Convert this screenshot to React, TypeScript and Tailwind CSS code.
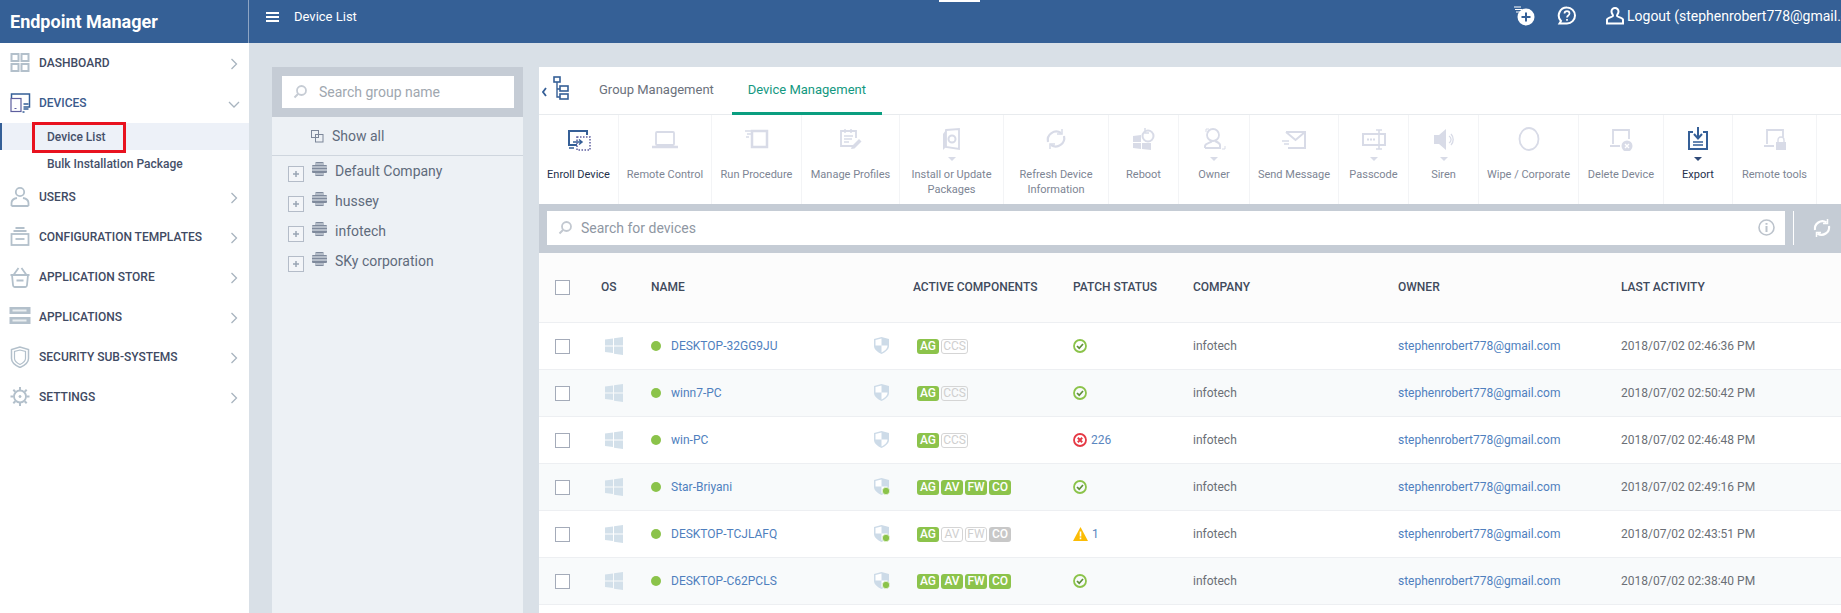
import type { ReactNode } from 'react';

const font = { roboto: "font-['Roboto','Noto_Sans',sans-serif]" };

const Off = '#d8dbe7';
const Blue = '#355f97';

function Chevron({ down }: { down?: boolean }) {
  return (
    <svg width="12" height="12" viewBox="0 0 12 12" fill="none" stroke="#a8b4bf" strokeWidth="1.3">
      {down ? <path d="M1 4l5 5 5-5" /> : <path d="M3.5 1l5 5-5 5" />}
    </svg>
  );
}

const navIcons: Record<string, ReactNode> = {
  DASHBOARD: (
    <g fill="none" stroke="#b3c0cb" strokeWidth="2">
      <rect x="2" y="2" width="7" height="7" />
      <rect x="12" y="2" width="7" height="7" />
      <rect x="2" y="12" width="7" height="7" />
      <rect x="12" y="12" width="7" height="7" />
    </g>
  ),
  DEVICES: (
    <g fill="none">
      <path d="M2 6V2h18v13h-6" stroke={Blue} strokeWidth="1.5" />
      <path d="M14 12h5M14 17h5" stroke={Blue} strokeWidth="1.5" />
      <rect x="1.5" y="6.5" width="10" height="13" stroke="#5d5f9e" strokeWidth="1.2" />
      <path d="M5 16.5h2" stroke="#5d5f9e" />
      <path d="M13 20h2" stroke={Blue} strokeWidth="1.5" />
    </g>
  ),
  USERS: (
    <g fill="none" stroke="#b3c0cb" strokeWidth="1.8">
      <circle cx="10.5" cy="6" r="4.2" />
      <path d="M2 20v-3c0-3 3-4.500 5.500-5M19 20v-3c0-3-3-4.500-5.500-5M2 20h17" />
    </g>
  ),
  'CONFIGURATION TEMPLATES': (
    <g fill="none" stroke="#b3c0cb" strokeWidth="1.8">
      <path d="M6 2h9M4 5h13" />
      <rect x="2" y="8" width="17" height="11" />
      <path d="M6 13h9" />
    </g>
  ),
  'APPLICATION STORE': (
    <g fill="none" stroke="#b3c0cb" strokeWidth="1.8">
      <path d="M1 9h19M2.500 9l1 10c.1 1 .7 2 2 2h10c1.300 0 1.900-1 2-2l1-10M4 9l5-7M17 9l-5-7M7 14.500h7" />
    </g>
  ),
  APPLICATIONS: (
    <g>
      <rect x="0" y="1" width="21" height="7" fill="#b3c0cb" />
      <rect x="0" y="11" width="21" height="7" fill="#b3c0cb" />
      <rect x="3" y="3.500" width="14" height="2" fill="#e9edf0" />
      <rect x="3" y="13.500" width="14" height="2" fill="#e9edf0" />
    </g>
  ),
  'SECURITY SUB-SYSTEMS': (
    <g fill="none" stroke="#b3c0cb">
      <path d="M10.500 1L2 3.500v9c0 4 4 7 8.500 9 4.500-2 8.500-5 8.500-9v-9z" strokeWidth="1.500" />
      <path d="M10.500 4L5 5.500v7c0 2.500 2.500 4.500 5.500 6 3-1.500 5.500-3.500 5.500-6v-7z" strokeWidth="1.200" />
    </g>
  ),
  SETTINGS: (
    <g fill="none" stroke="#b3c0cb">
      <circle cx="10.500" cy="10.500" r="6" strokeWidth="1.800" />
      <circle cx="10.500" cy="10.500" r="1" fill="#b3c0cb" />
      <path d="M10.500 1v3M10.500 17v3M1 10.500h3M17 10.500h3M3.800 3.800l2 2M15.200 15.200l2 2M3.800 17.200l2-2M15.200 5.800l2-2" strokeWidth="2" />
    </g>
  ),
};

function NavItem({ label, open }: { label: string; open?: boolean }) {
  return (
    <div className="flex h-10 items-center pl-[9px] pr-[9px]">
      <svg width="22" height="22" viewBox="0 0 21 22" className="flex-none">
        {navIcons[label]}
      </svg>
      <span className={`ml-2 flex-1 text-xs font-medium ${open ? 'text-[#3b5a8c]' : 'text-[#3f4a63]'}`}>{label}</span>
      <span className="mt-[2px]">
        <Chevron down={open} />
      </span>
    </div>
  );
}

function Sidebar() {
  return (
    <aside className="h-full w-[249px] flex-none bg-white">
      <NavItem label="DASHBOARD" />
      <NavItem label="DEVICES" open />
      <div className="relative">
        <div className="flex h-[27px] items-center border-l-2 border-[#355f97] bg-[#edf1f8] pl-[45px] text-xs font-medium text-[#45506a]">
          Device List
        </div>
        <div className="absolute -top-[1px] left-8 h-[31px] w-[94px] border-[3px] border-[#e8121f]" />
        <div className="flex h-[27px] items-center pl-[47px] text-xs font-medium text-[#45506a]">
          Bulk Installation Package
        </div>
      </div>
      <NavItem label="USERS" />
      <NavItem label="CONFIGURATION TEMPLATES" />
      <NavItem label="APPLICATION STORE" />
      <NavItem label="APPLICATIONS" />
      <NavItem label="SECURITY SUB-SYSTEMS" />
      <NavItem label="SETTINGS" />
    </aside>
  );
}

function TopBar() {
  return (
    <header className="relative flex h-[43px] flex-none items-start overflow-hidden bg-[#356096] text-white">
      <div className="absolute left-[939px] top-0 h-[2px] w-[41px] bg-white" />
      <div className="flex h-full w-[249px] flex-none items-center border-r border-[#8ea5c4] pl-[10px]">
        <span className="text-lg font-bold">Endpoint Manager</span>
      </div>
      <svg width="13" height="10" viewBox="0 0 13 10" className="ml-[17px] mt-3 flex-none" fill="#fff">
        <rect width="13" height="2" />
        <rect y="4" width="13" height="2" />
        <rect y="8" width="13" height="2" />
      </svg>
      <span className="ml-[15px] mt-[8px] w-[1219px] flex-none text-[13px] leading-[18px]">Device List</span>
      <svg width="22" height="20" viewBox="0 0 22 20" className="mt-[6px] flex-none">
        <path d="M1 1h7M2 3.500h7M3 6h4" stroke="#fff" strokeWidth="1" />
        <circle cx="13" cy="11" r="8.500" fill="#fff" />
        <path d="M13 6.500v9M8.500 11h9" stroke={Blue} strokeWidth="2" />
      </svg>
      <svg width="20" height="20" viewBox="0 0 20 20" className="ml-[22px] mt-[6px] flex-none" fill="none" stroke="#fff">
        <path d="M10 1.500a8 8 0 0 1 0 16H2.500l1.500-2.500a8 8 0 0 1 6-13.500z" strokeWidth="2" />
        <path d="M7.500 7.500c0-3.200 5-3.200 5 0 0 2-2.500 2-2.500 4" strokeWidth="1.700" />
        <path d="M10 13v1.800" strokeWidth="1.700" />
      </svg>
      <svg width="18" height="18" viewBox="0 0 18 18" className="ml-[29px] mt-[7px] flex-none" fill="none" stroke="#fff" strokeWidth="2">
        <path d="M9 1a3.500 3.500 0 0 0-3.500 3.500c0 2 1.500 3 1.500 4.500 0 1-5.500 1.500-6 3.500V16.500h16v-4c-.5-2-6-2.500-6-3.500 0-1.500 1.500-2.500 1.500-4.500A3.500 3.500 0 0 0 9 1z" />
      </svg>
      <span className="ml-[3px] mt-[6px] whitespace-nowrap text-sm leading-5">Logout (stephenrobert778@gmail.com)</span>
    </header>
  );
}

function SearchGlass({ color }: { color: string }) {
  return (
    <svg width="14" height="14" viewBox="0 0 14 14" fill="none" stroke={color} className="flex-none">
      <circle cx="8.500" cy="5.500" r="4.500" strokeWidth="1.800" />
      <path d="M5 9l-3.500 3.500" strokeWidth="2" />
    </svg>
  );
}

function GroupRow({ name }: { name: string }) {
  return (
    <div className="flex h-[30px] items-start pl-[16px]">
      <span className="mt-[10px] flex h-4 w-4 flex-none items-center justify-center border border-[#b4bcc8] bg-[#f3f5f8]">
        <svg width="8" height="8" viewBox="0 0 8 8" stroke="#9aa5b4" strokeWidth="1.500">
          <path d="M4 1v6M1 4h6" />
        </svg>
      </span>
      <svg width="15" height="14" viewBox="0 0 15 14" className="ml-2 mt-[6px] flex-none" fill="#7f8a9c">
        <rect x="3" y="0" width="9" height="14" rx="1.500" />
        <rect x="0" y="3" width="15" height="8" rx="1" />
        <path d="M0 5h15M0 8h15M3 2h9M3 12h9" stroke="#edf1f5" strokeWidth="1" />
      </svg>
      <span className="ml-2 mt-[5px] text-sm leading-5 text-[#5f6b7c]">{name}</span>
    </div>
  );
}

function GroupPanel() {
  return (
    <div className="ml-[23px] mt-6 w-[251px] flex-none bg-[#edf1f5]">
      <div className="h-[50px] bg-[#c5ccd5] py-[9px] pl-[10px] pr-[9px]">
        <div className="flex h-8 items-center bg-white pl-[11px] text-sm text-[#a0a7af]">
          <SearchGlass color="#c6ccd4" />
          <span className="ml-3">Search group name</span>
        </div>
      </div>
      <div className="flex h-[39px] items-center border-b border-[#cfd6de] pl-[39px]">
        <svg width="13" height="13" viewBox="0 0 13 13" fill="none" stroke="#7c8799" className="flex-none">
          <rect x="0.500" y="0.500" width="7" height="7" />
          <rect x="4.500" y="4.500" width="7.500" height="7.500" />
        </svg>
        <span className="ml-2 text-sm text-[#5f6b7c]">Show all</span>
      </div>
      <div>
        <GroupRow name="Default Company" />
        <GroupRow name="hussey" />
        <GroupRow name="infotech" />
        <GroupRow name="SKy corporation" />
      </div>
    </div>
  );
}

const toolIcons: Record<string, ReactNode> = {
  enroll: (
    <g fill="none">
      <path d="M12 18H4V4h18v4" stroke={Blue} strokeWidth="2" />
      <path d="M8 15h9m-3-2.500l3 2.500-3 2.500M4 21h5" stroke={Blue} strokeWidth="1.500" />
      <rect x="12" y="10" width="13" height="13" stroke="#5d5f9e" strokeWidth="1.500" strokeDasharray="1.500 1.500" />
    </g>
  ),
  laptop: (
    <g fill="none" stroke={Off} strokeWidth="1.800">
      <rect x="5" y="5" width="18" height="13" rx="1" />
      <path d="M1 20h26" strokeWidth="2.500" />
    </g>
  ),
  run: (
    <g fill="none" stroke={Off} strokeWidth="1.800">
      <path d="M9 4h15v16H9z" strokeWidth="2.500" />
      <path d="M2 4h6M4 7h4M3 10h3" strokeWidth="1.500" />
    </g>
  ),
  profile: (
    <g fill="none" stroke={Off} strokeWidth="1.800">
      <path d="M18 19H4V4h15v7" />
      <path d="M8 2v4M14 2v4M7 9h9M7 12h8M7 15h5" strokeWidth="1.500" />
      <path d="M14 22l1-3 7-7 2.500 2.500-7 7z" fill={Off} stroke="none" />
    </g>
  ),
  install: (
    <g>
      <path d="M8 3l13-1v20l-13-2z" fill="none" stroke={Off} strokeWidth="1.800" />
      <path d="M8 3L5 7v16l3-3z" fill={Off} />
      <circle cx="14" cy="12" r="3.500" fill="none" stroke={Off} strokeWidth="2" />
    </g>
  ),
  sync: (
    <g fill="none" stroke={Off} strokeWidth="2.200">
      <path d="M6 15a8.500 8.500 0 0 1 13-9M22 9a8.500 8.500 0 0 1-13 9" />
      <path d="M20 2v5h-5M8 22v-5h5" strokeWidth="1.500" />
    </g>
  ),
  reboot: (
    <g>
      <path d="M3 9l8-1v7H3zM3 16h8v6l-8-1zM12 16h9v7l-9-1z" fill={Off} />
      <circle cx="18" cy="9" r="5.500" fill="none" stroke={Off} strokeWidth="2" />
      <path d="M15 1v5h4" fill="none" stroke={Off} strokeWidth="1.500" />
    </g>
  ),
  owner: (
    <g fill="none" stroke={Off} strokeWidth="1.800">
      <circle cx="13" cy="8" r="6" />
      <path d="M5 21v-2c0-3 6-3 7-5M5 21h15v-3c0-2-3-3-5-4" strokeWidth="2" />
      <path d="M6 5V2h3M25 19v3h-3" strokeWidth="1" />
    </g>
  ),
  mail: (
    <g fill="none" stroke={Off} strokeWidth="2">
      <path d="M6 5h19v16H8M6 5l9.500 8L25 5" />
      <path d="M2 14h7M4 17h5" strokeWidth="1.300" />
    </g>
  ),
  passcode: (
    <g fill="none" stroke={Off} strokeWidth="2">
      <rect x="3" y="7" width="22" height="11" />
      <path d="M19 3v19M16 3h6M16 22h6" strokeWidth="1.600" />
      <path d="M7 12.500h8" strokeWidth="2" strokeDasharray="2 1" />
    </g>
  ),
  siren: (
    <g>
      <path d="M4 8h5l7-6v21l-7-6H4z" fill={Off} />
      <path d="M19 9a4 4 0 0 1 0 7M21 7a8 8 0 0 1 0 11" fill="none" stroke={Off} strokeWidth="1.300" />
    </g>
  ),
  wipe: <ellipse cx="14" cy="12" rx="9.500" ry="11" fill="none" stroke={Off} strokeWidth="1.800" />,
  delete: (
    <g fill="none" stroke={Off} strokeWidth="1.800">
      <path d="M6 17V3h16v9M3 19h10" />
      <circle cx="20" cy="19" r="5.500" fill={Off} stroke="none" />
      <path d="M18 17l4 4M22 17l-4 4" stroke="#fff" strokeWidth="1.400" />
    </g>
  ),
  export: (
    <g fill="none" stroke={Blue}>
      <path d="M9 5H5v17h18V5h-4" strokeWidth="2" />
      <path d="M14 0v11m-4-4l4 4.500 4-4.500" strokeWidth="2" />
      <path d="M9 15h10M9 18h10" strokeWidth="1.300" />
    </g>
  ),
  remote: (
    <g fill="none" stroke={Off} strokeWidth="1.800">
      <path d="M6 17V3h16v7M3 19h10" />
      <rect x="15" y="15" width="10" height="8" fill={Off} stroke="none" />
      <path d="M17 15v-2a3 3 0 0 1 6 0v2" strokeWidth="1.400" />
    </g>
  ),
};

const tools = [
  { w: 'w-[80px]', icon: 'enroll', label: 'Enroll Device', active: true },
  { w: 'w-[93px]', icon: 'laptop', label: 'Remote Control' },
  { w: 'w-[90px]', icon: 'run', label: 'Run Procedure' },
  { w: 'w-[98px]', icon: 'profile', label: 'Manage Profiles' },
  { w: 'w-[104px]', icon: 'install', label: 'Install or Update\nPackages', caret: true },
  { w: 'w-[105px]', icon: 'sync', label: 'Refresh Device\nInformation' },
  { w: 'w-[70px]', icon: 'reboot', label: 'Reboot' },
  { w: 'w-[71px]', icon: 'owner', label: 'Owner', caret: true },
  { w: 'w-[89px]', icon: 'mail', label: 'Send Message' },
  { w: 'w-[70px]', icon: 'passcode', label: 'Passcode', caret: true },
  { w: 'w-[70px]', icon: 'siren', label: 'Siren', caret: true },
  { w: 'w-[100px]', icon: 'wipe', label: 'Wipe / Corporate' },
  { w: 'w-[85px]', icon: 'delete', label: 'Delete Device' },
  { w: 'w-[69px]', icon: 'export', label: 'Export', caret: true, active: true },
  { w: 'w-[84px]', icon: 'remote', label: 'Remote tools' },
];

function Toolbar() {
  return (
    <div className="flex h-[89px] flex-none">
      {tools.map((t) => (
        <div key={t.label} className={`${t.w} flex flex-none flex-col items-center border-r border-[#f3f4f6] pt-[12px]`}>
          <svg width="28" height="24" viewBox="0 0 28 24" className="flex-none">
            {toolIcons[t.icon]}
          </svg>
          <div className="flex h-[16px] flex-none items-center justify-center">
            {t.caret && (
              <span
                className={`h-0 w-0 border-x-[4px] border-t-[4px] border-x-transparent ${
                  t.active ? 'border-t-[#2f4a78]' : 'border-t-[#d8dbe7]'
                }`}
              />
            )}
          </div>
          <div
            className={`whitespace-pre-line text-center text-[11px] leading-[15px] ${
              t.active ? 'text-[#24304c]' : 'text-[#7d8594]'
            }`}
          >
            {t.label}
          </div>
        </div>
      ))}
    </div>
  );
}

function SearchBar() {
  return (
    <div className="flex h-[49px] flex-none items-center bg-[#c5ccd5] pb-[2px] pl-2">
      <div className="flex h-[34px] w-[1238px] flex-none items-center bg-white pl-[11px] pr-[10px] text-sm text-[#8f97a3]">
        <SearchGlass color="#c2c8d0" />
        <span className="ml-[9px] flex-1">Search for devices</span>
        <svg width="17" height="17" viewBox="0 0 17 17" fill="none" stroke="#bcc3cc">
          <circle cx="8.500" cy="8.500" r="7.500" strokeWidth="1.600" />
          <path d="M8.500 7v6M8.500 4v1.800" strokeWidth="2" />
        </svg>
      </div>
      <div className="ml-2 h-[34px] w-[1px] flex-none bg-white" />
      <svg width="20" height="20" viewBox="0 0 20 20" fill="none" stroke="#fff" strokeWidth="2.200" className="ml-[18px] flex-none">
        <path d="M3 12a7.500 7.500 0 0 1 11.500-7.500M17 8a7.500 7.500 0 0 1-11.500 7.500" />
        <path d="M15.500 1v4.500H11M4.500 19v-4.500H9" strokeWidth="1.500" />
      </svg>
    </div>
  );
}

type Badge = { t: string; on: 'green' | 'off' | 'grey' };

const ag: Badge = { t: 'AG', on: 'green' };
const ccs: Badge[] = [ag, { t: 'CCS', on: 'off' }];
const full: Badge[] = [ag, { t: 'AV', on: 'green' }, { t: 'FW', on: 'green' }, { t: 'CO', on: 'green' }];

const devices: {
  name: string;
  badges: Badge[];
  patch: 'ok' | 'bad' | 'warn';
  count?: string;
  guard?: boolean;
  time: string;
}[] = [
  { name: 'DESKTOP-32GG9JU', badges: ccs, patch: 'ok', time: '2018/07/02 02:46:36 PM' },
  { name: 'winn7-PC', badges: ccs, patch: 'ok', time: '2018/07/02 02:50:42 PM' },
  { name: 'win-PC', badges: ccs, patch: 'bad', count: '226', time: '2018/07/02 02:46:48 PM' },
  { name: 'Star-Briyani', badges: full, patch: 'ok', guard: true, time: '2018/07/02 02:49:16 PM' },
  {
    name: 'DESKTOP-TCJLAFQ',
    badges: [ag, { t: 'AV', on: 'off' }, { t: 'FW', on: 'off' }, { t: 'CO', on: 'grey' }],
    patch: 'warn',
    count: '1',
    guard: true,
    time: '2018/07/02 02:43:51 PM',
  },
  { name: 'DESKTOP-C62PCLS', badges: full, patch: 'ok', guard: true, time: '2018/07/02 02:38:40 PM' },
];

const cols = 'grid grid-cols-[62px_50px_222px_44px_156px_120px_205px_223px_1fr] items-center';

function PatchIcon({ kind }: { kind: 'ok' | 'bad' | 'warn' }) {
  if (kind === 'warn') {
    return (
      <svg width="15" height="14" viewBox="0 0 15 14" className="flex-none">
        <path d="M7.500 0L15 14H0z" fill="#fbbc05" />
        <path d="M7.500 4.500v5M7.500 10.500v1.800" stroke="#fff" strokeWidth="1.600" />
      </svg>
    );
  }
  const c = kind === 'ok' ? '#8bc34a' : '#e53945';
  return (
    <svg width="14" height="14" viewBox="0 0 14 14" fill="none" className="flex-none">
      <circle cx="7" cy="7" r="6" stroke={c} strokeWidth="1.800" />
      {kind === 'ok' ? (
        <path d="M4 7l2.200 2.200L10 5" stroke="#5f8f3a" strokeWidth="1.700" />
      ) : (
        <path d="M4.800 4.800l4.400 4.400M9.200 4.800l-4.400 4.400" stroke={c} strokeWidth="2" />
      )}
    </svg>
  );
}

function Shield({ dot }: { dot?: boolean }) {
  return (
    <svg width="16" height="17" viewBox="0 0 16 17" className="mb-[2px]">
      <path d="M7.500 0L0 2v7c0 3.500 3.500 6 7.500 8 4-2 7.500-4.500 7.500-8V2z" fill="#cddbe8" />
      <path d="M7.500 1.500L1.500 3v5.500h6zM7.500 8.500v7c3-1.500 6-3.500 6-7z" fill="#fff" />
      {dot && <circle cx="12" cy="13" r="3.700" fill="#8bc34a" stroke="#fff" strokeWidth="0.600" />}
    </svg>
  );
}

function WinLogo() {
  return (
    <svg width="18" height="18" viewBox="0 0 18 18" fill="#d3e0ea">
      <path d="M0 2.500l8-1v7H0zM9 1.300L18 0v8.500H9zM0 9.500h8V16l-8-1zM9 9.500h9V18l-9-1.300z" />
    </svg>
  );
}

function Checkbox() {
  return <span className="ml-4 block h-[15px] w-[15px] border border-[#a4abb9] bg-white" />;
}

function DeviceRow({ d, i }: { d: (typeof devices)[number]; i: number }) {
  return (
    <div className={`${cols} h-[47px] border-b border-[#edeff2] text-xs ${i % 2 ? 'bg-[#f8fafb]' : 'bg-white'}`}>
      <Checkbox />
      <div className="pl-1">
        <WinLogo />
      </div>
      <div className="flex items-center">
        <span className="h-[10px] w-[10px] rounded-full bg-[#8bc34a]" />
        <a className="ml-[10px] text-[#4f7fbe]">{d.name}</a>
      </div>
      <div className="pl-[1px]">
        <Shield dot={d.guard} />
      </div>
      <div className="flex gap-[2px]">
        {d.badges.map((b) => (
          <span
            key={b.t}
            className={`flex h-[15px] items-center justify-center rounded-[3px] text-xs font-medium ${
              b.t === 'CCS' ? 'w-[27px]' : 'w-[22px]'
            } ${
              b.on === 'green'
                ? 'bg-[#8cc34b] text-white'
                : b.on === 'grey'
                  ? 'bg-[#c8c8c8] text-white'
                  : 'border border-[#d5d5d5] font-normal text-[#cfcfcf]'
            }`}
          >
            {b.t}
          </span>
        ))}
      </div>
      <div className="flex items-center gap-1 text-[#5a86c0]">
        <PatchIcon kind={d.patch} />
        {d.count && <span>{d.count}</span>}
      </div>
      <div className="text-[#6b6f76]">infotech</div>
      <a className="text-[#4f7fbe]">stephenrobert778@gmail.com</a>
      <div className="text-[#6b6f76]">{d.time}</div>
    </div>
  );
}

function DeviceTable() {
  return (
    <div className="flex-1 bg-white">
      <div className={`${cols} h-[70px] border-b border-[#edeff2] bg-[#fcfcfc] pb-[1px] text-xs font-medium text-[#3f4a5c]`}>
        <Checkbox />
        <div>OS</div>
        <div>NAME</div>
        <div />
        <div className="-ml-1 whitespace-nowrap">ACTIVE COMPONENTS</div>
        <div>PATCH STATUS</div>
        <div>COMPANY</div>
        <div>OWNER</div>
        <div>LAST ACTIVITY</div>
      </div>
      {devices.map((d, i) => (
        <DeviceRow key={d.name} d={d} i={i} />
      ))}
    </div>
  );
}

function MainPanel() {
  return (
    <div className="ml-4 mt-6 flex min-w-0 flex-1 flex-col bg-white">
      <div className="flex h-[48px] flex-none items-start border-b border-[#e8ebee]">
        <svg width="30" height="26" viewBox="0 0 30 26" className="ml-[3px] mt-[8px] flex-none" fill="none" stroke={Blue}>
          <path d="M4 13l-3 4 3 4" strokeWidth="1.800" />
          <rect x="12" y="2" width="6" height="5" strokeWidth="1.600" />
          <path d="M15 7v15h3M15 14h3" strokeWidth="1.400" />
          <rect x="18" y="11" width="8" height="5" strokeWidth="1.600" />
          <rect x="18" y="19" width="8" height="5" strokeWidth="1.600" />
        </svg>
        <div className="ml-[27px] mt-[14px] text-[13px] leading-[18px] text-[#6b717c]">Group Management</div>
        <div className="ml-[18px] flex h-[48px] w-[150px] justify-center border-b-[3px] border-[#0a9e80] pt-[14px] text-[13px] leading-[18px] text-[#13987f]">
          Device Management
        </div>
      </div>
      <Toolbar />
      <SearchBar />
      <DeviceTable />
    </div>
  );
}

export default function App() {
  return (
    <div className={`${font.roboto} flex h-screen w-screen flex-col overflow-hidden bg-[#d9e0e7]`}>
      <TopBar />
      <div className="flex min-h-0 flex-1">
        <Sidebar />
        <GroupPanel />
        <MainPanel />
      </div>
    </div>
  );
}
